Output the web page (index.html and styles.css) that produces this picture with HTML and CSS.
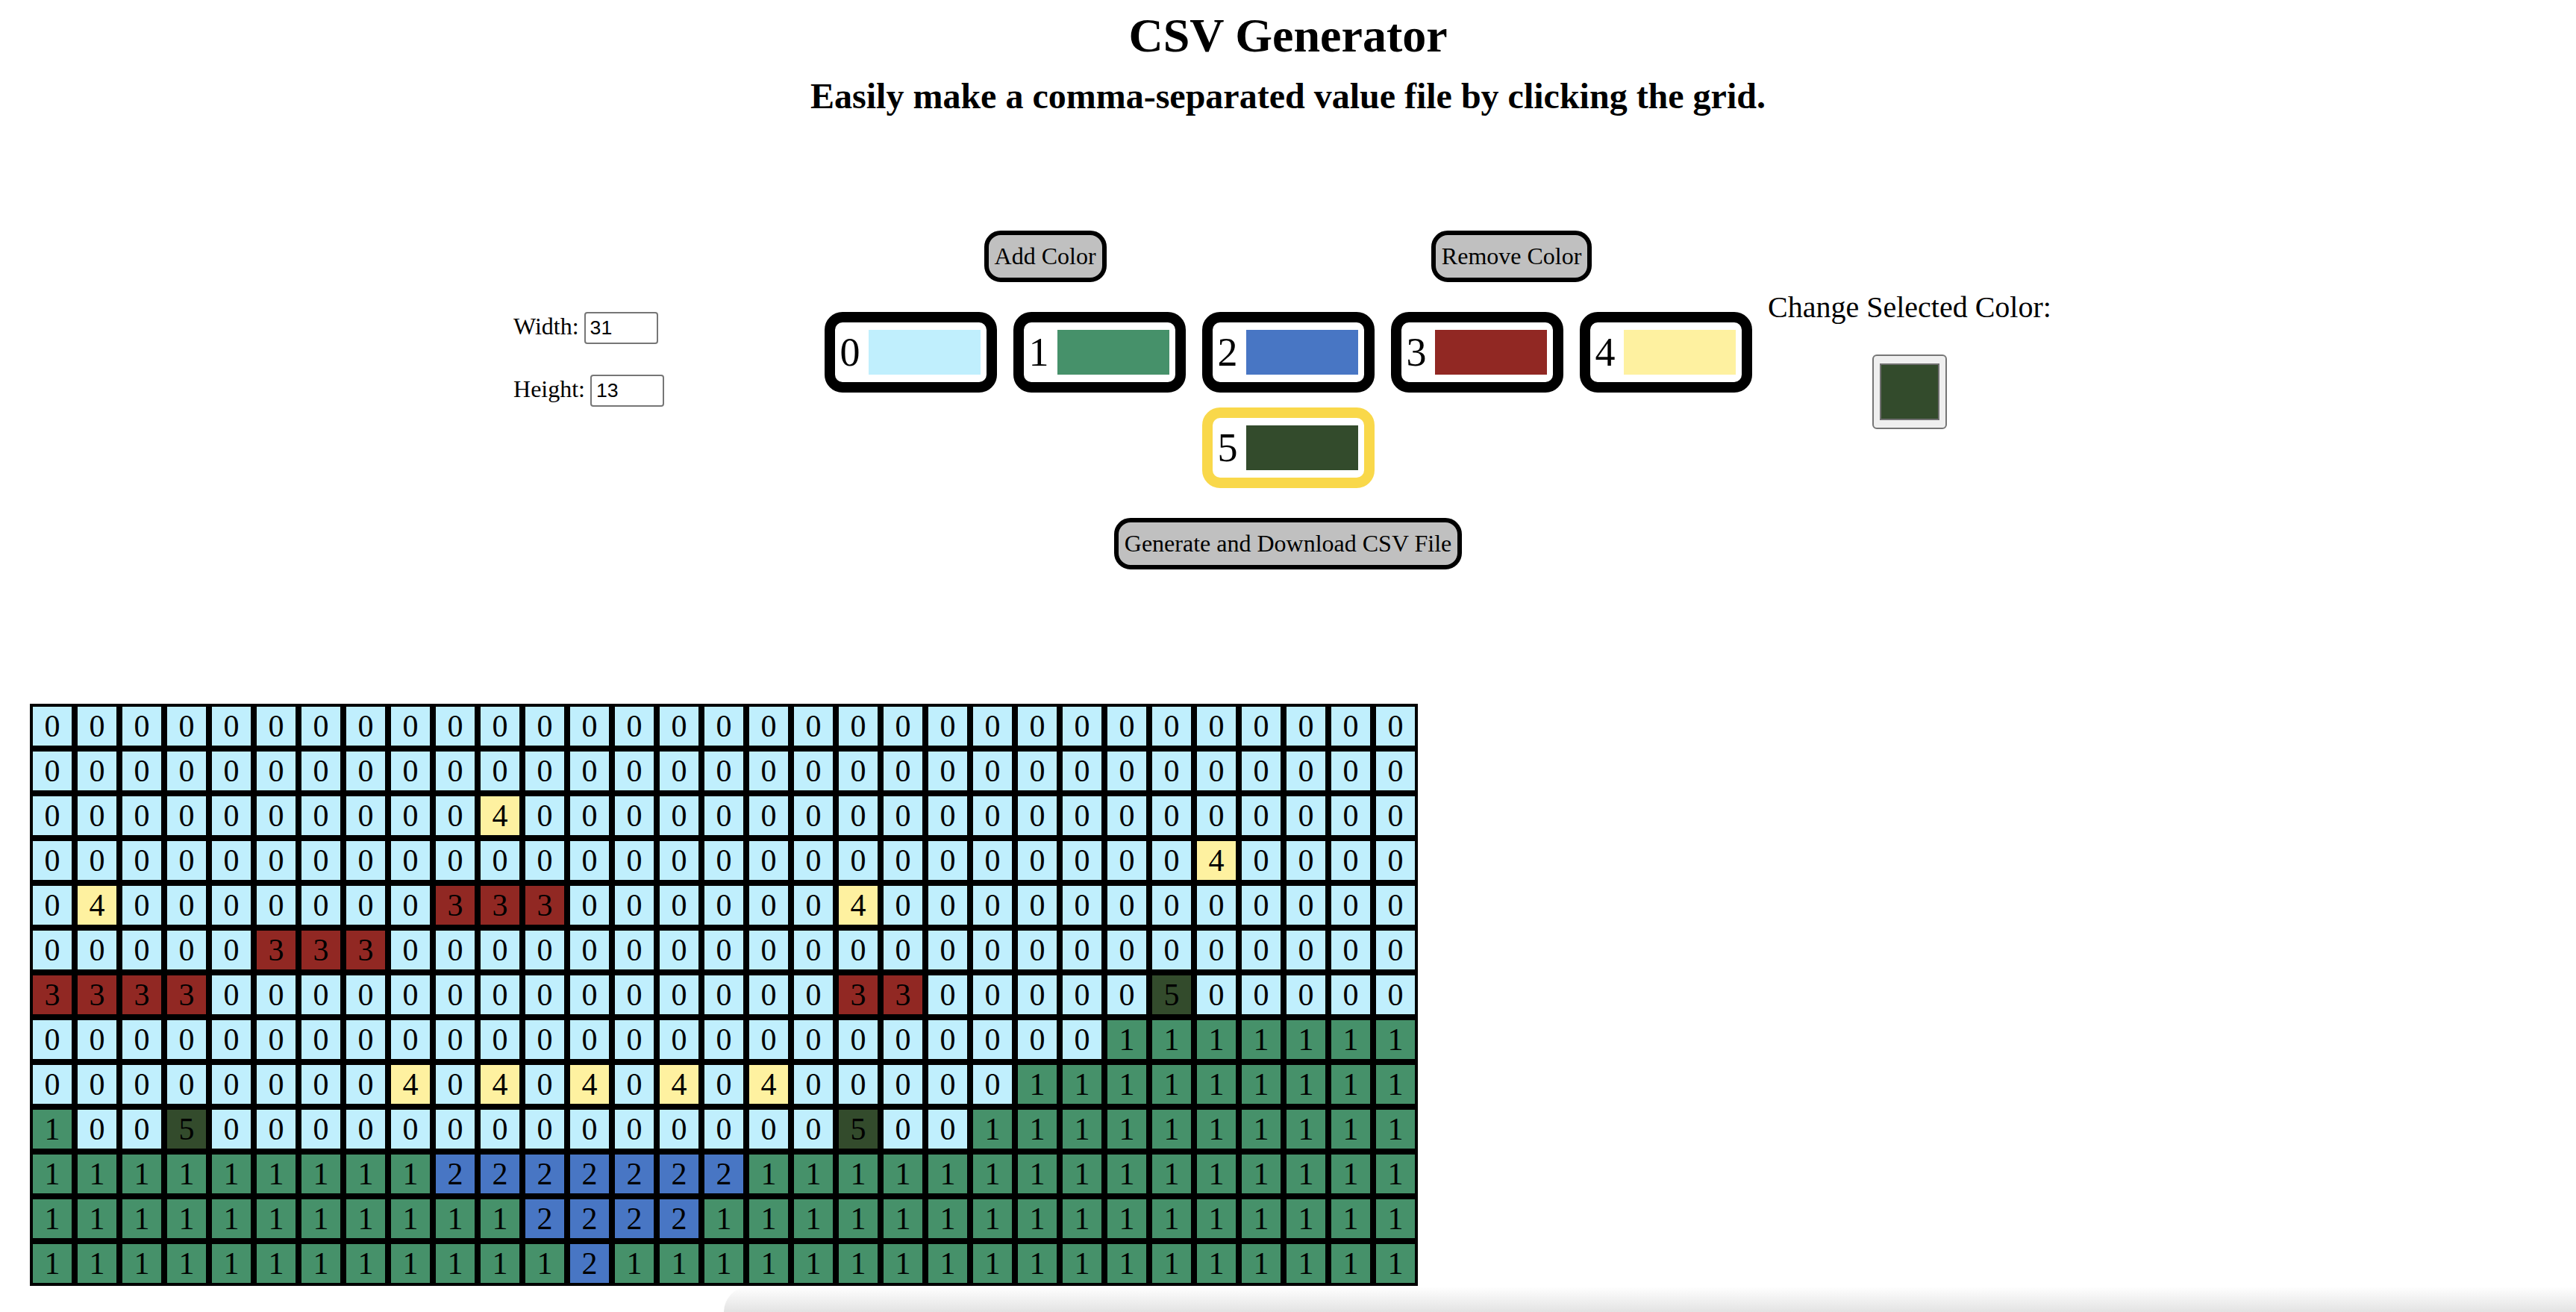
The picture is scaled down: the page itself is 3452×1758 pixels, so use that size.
FILE: index.html
```html
<!DOCTYPE html>
<html lang="en">
<head>
<meta charset="utf-8">
<title>CSV Generator</title>
<link rel="stylesheet" href="styles.css">
</head>
<body>
<h1 class="title">CSV Generator</h1>
<h2 class="subtitle">Easily make a comma-separated value file by clicking the grid.</h2>

<section class="controls">
  <div class="dims">
    <div class="dim-row"><label class="dim-label" for="w">Width:</label><input class="dim-input" id="w" type="text" value="31"></div>
    <div class="dim-row"><label class="dim-label" for="h">Height:</label><input class="dim-input" id="h" type="text" value="13"></div>
  </div>

  <div class="palette-area">
    <div class="palette-actions">
      <button class="btn">Add Color</button>
      <button class="btn">Remove Color</button>
    </div>
    <div class="swatches">
      <button class="swatch"><span class="swatch-num">0</span><span class="swatch-chip k0"></span></button>
      <button class="swatch"><span class="swatch-num">1</span><span class="swatch-chip k1"></span></button>
      <button class="swatch"><span class="swatch-num">2</span><span class="swatch-chip k2"></span></button>
      <button class="swatch"><span class="swatch-num">3</span><span class="swatch-chip k3"></span></button>
      <button class="swatch"><span class="swatch-num">4</span><span class="swatch-chip k4"></span></button>
      <button class="swatch selected"><span class="swatch-num">5</span><span class="swatch-chip k5"></span></button>
    </div>
  </div>

  <div class="picker-panel">
    <div class="picker-label">Change Selected Color:</div>
    <div class="picker"><div class="picker-chip"></div></div>
  </div>
</section>

<div class="generate-row"><button class="btn">Generate and Download CSV File</button></div>

<div class="board">
<span class="k0">0</span><span class="k0">0</span><span class="k0">0</span><span class="k0">0</span><span class="k0">0</span><span class="k0">0</span><span class="k0">0</span><span class="k0">0</span><span class="k0">0</span><span class="k0">0</span><span class="k0">0</span><span class="k0">0</span><span class="k0">0</span><span class="k0">0</span><span class="k0">0</span><span class="k0">0</span><span class="k0">0</span><span class="k0">0</span><span class="k0">0</span><span class="k0">0</span><span class="k0">0</span><span class="k0">0</span><span class="k0">0</span><span class="k0">0</span><span class="k0">0</span><span class="k0">0</span><span class="k0">0</span><span class="k0">0</span><span class="k0">0</span><span class="k0">0</span><span class="k0">0</span>
<span class="k0">0</span><span class="k0">0</span><span class="k0">0</span><span class="k0">0</span><span class="k0">0</span><span class="k0">0</span><span class="k0">0</span><span class="k0">0</span><span class="k0">0</span><span class="k0">0</span><span class="k0">0</span><span class="k0">0</span><span class="k0">0</span><span class="k0">0</span><span class="k0">0</span><span class="k0">0</span><span class="k0">0</span><span class="k0">0</span><span class="k0">0</span><span class="k0">0</span><span class="k0">0</span><span class="k0">0</span><span class="k0">0</span><span class="k0">0</span><span class="k0">0</span><span class="k0">0</span><span class="k0">0</span><span class="k0">0</span><span class="k0">0</span><span class="k0">0</span><span class="k0">0</span>
<span class="k0">0</span><span class="k0">0</span><span class="k0">0</span><span class="k0">0</span><span class="k0">0</span><span class="k0">0</span><span class="k0">0</span><span class="k0">0</span><span class="k0">0</span><span class="k0">0</span><span class="k4">4</span><span class="k0">0</span><span class="k0">0</span><span class="k0">0</span><span class="k0">0</span><span class="k0">0</span><span class="k0">0</span><span class="k0">0</span><span class="k0">0</span><span class="k0">0</span><span class="k0">0</span><span class="k0">0</span><span class="k0">0</span><span class="k0">0</span><span class="k0">0</span><span class="k0">0</span><span class="k0">0</span><span class="k0">0</span><span class="k0">0</span><span class="k0">0</span><span class="k0">0</span>
<span class="k0">0</span><span class="k0">0</span><span class="k0">0</span><span class="k0">0</span><span class="k0">0</span><span class="k0">0</span><span class="k0">0</span><span class="k0">0</span><span class="k0">0</span><span class="k0">0</span><span class="k0">0</span><span class="k0">0</span><span class="k0">0</span><span class="k0">0</span><span class="k0">0</span><span class="k0">0</span><span class="k0">0</span><span class="k0">0</span><span class="k0">0</span><span class="k0">0</span><span class="k0">0</span><span class="k0">0</span><span class="k0">0</span><span class="k0">0</span><span class="k0">0</span><span class="k0">0</span><span class="k4">4</span><span class="k0">0</span><span class="k0">0</span><span class="k0">0</span><span class="k0">0</span>
<span class="k0">0</span><span class="k4">4</span><span class="k0">0</span><span class="k0">0</span><span class="k0">0</span><span class="k0">0</span><span class="k0">0</span><span class="k0">0</span><span class="k0">0</span><span class="k3">3</span><span class="k3">3</span><span class="k3">3</span><span class="k0">0</span><span class="k0">0</span><span class="k0">0</span><span class="k0">0</span><span class="k0">0</span><span class="k0">0</span><span class="k4">4</span><span class="k0">0</span><span class="k0">0</span><span class="k0">0</span><span class="k0">0</span><span class="k0">0</span><span class="k0">0</span><span class="k0">0</span><span class="k0">0</span><span class="k0">0</span><span class="k0">0</span><span class="k0">0</span><span class="k0">0</span>
<span class="k0">0</span><span class="k0">0</span><span class="k0">0</span><span class="k0">0</span><span class="k0">0</span><span class="k3">3</span><span class="k3">3</span><span class="k3">3</span><span class="k0">0</span><span class="k0">0</span><span class="k0">0</span><span class="k0">0</span><span class="k0">0</span><span class="k0">0</span><span class="k0">0</span><span class="k0">0</span><span class="k0">0</span><span class="k0">0</span><span class="k0">0</span><span class="k0">0</span><span class="k0">0</span><span class="k0">0</span><span class="k0">0</span><span class="k0">0</span><span class="k0">0</span><span class="k0">0</span><span class="k0">0</span><span class="k0">0</span><span class="k0">0</span><span class="k0">0</span><span class="k0">0</span>
<span class="k3">3</span><span class="k3">3</span><span class="k3">3</span><span class="k3">3</span><span class="k0">0</span><span class="k0">0</span><span class="k0">0</span><span class="k0">0</span><span class="k0">0</span><span class="k0">0</span><span class="k0">0</span><span class="k0">0</span><span class="k0">0</span><span class="k0">0</span><span class="k0">0</span><span class="k0">0</span><span class="k0">0</span><span class="k0">0</span><span class="k3">3</span><span class="k3">3</span><span class="k0">0</span><span class="k0">0</span><span class="k0">0</span><span class="k0">0</span><span class="k0">0</span><span class="k5">5</span><span class="k0">0</span><span class="k0">0</span><span class="k0">0</span><span class="k0">0</span><span class="k0">0</span>
<span class="k0">0</span><span class="k0">0</span><span class="k0">0</span><span class="k0">0</span><span class="k0">0</span><span class="k0">0</span><span class="k0">0</span><span class="k0">0</span><span class="k0">0</span><span class="k0">0</span><span class="k0">0</span><span class="k0">0</span><span class="k0">0</span><span class="k0">0</span><span class="k0">0</span><span class="k0">0</span><span class="k0">0</span><span class="k0">0</span><span class="k0">0</span><span class="k0">0</span><span class="k0">0</span><span class="k0">0</span><span class="k0">0</span><span class="k0">0</span><span class="k1">1</span><span class="k1">1</span><span class="k1">1</span><span class="k1">1</span><span class="k1">1</span><span class="k1">1</span><span class="k1">1</span>
<span class="k0">0</span><span class="k0">0</span><span class="k0">0</span><span class="k0">0</span><span class="k0">0</span><span class="k0">0</span><span class="k0">0</span><span class="k0">0</span><span class="k4">4</span><span class="k0">0</span><span class="k4">4</span><span class="k0">0</span><span class="k4">4</span><span class="k0">0</span><span class="k4">4</span><span class="k0">0</span><span class="k4">4</span><span class="k0">0</span><span class="k0">0</span><span class="k0">0</span><span class="k0">0</span><span class="k0">0</span><span class="k1">1</span><span class="k1">1</span><span class="k1">1</span><span class="k1">1</span><span class="k1">1</span><span class="k1">1</span><span class="k1">1</span><span class="k1">1</span><span class="k1">1</span>
<span class="k1">1</span><span class="k0">0</span><span class="k0">0</span><span class="k5">5</span><span class="k0">0</span><span class="k0">0</span><span class="k0">0</span><span class="k0">0</span><span class="k0">0</span><span class="k0">0</span><span class="k0">0</span><span class="k0">0</span><span class="k0">0</span><span class="k0">0</span><span class="k0">0</span><span class="k0">0</span><span class="k0">0</span><span class="k0">0</span><span class="k5">5</span><span class="k0">0</span><span class="k0">0</span><span class="k1">1</span><span class="k1">1</span><span class="k1">1</span><span class="k1">1</span><span class="k1">1</span><span class="k1">1</span><span class="k1">1</span><span class="k1">1</span><span class="k1">1</span><span class="k1">1</span>
<span class="k1">1</span><span class="k1">1</span><span class="k1">1</span><span class="k1">1</span><span class="k1">1</span><span class="k1">1</span><span class="k1">1</span><span class="k1">1</span><span class="k1">1</span><span class="k2">2</span><span class="k2">2</span><span class="k2">2</span><span class="k2">2</span><span class="k2">2</span><span class="k2">2</span><span class="k2">2</span><span class="k1">1</span><span class="k1">1</span><span class="k1">1</span><span class="k1">1</span><span class="k1">1</span><span class="k1">1</span><span class="k1">1</span><span class="k1">1</span><span class="k1">1</span><span class="k1">1</span><span class="k1">1</span><span class="k1">1</span><span class="k1">1</span><span class="k1">1</span><span class="k1">1</span>
<span class="k1">1</span><span class="k1">1</span><span class="k1">1</span><span class="k1">1</span><span class="k1">1</span><span class="k1">1</span><span class="k1">1</span><span class="k1">1</span><span class="k1">1</span><span class="k1">1</span><span class="k1">1</span><span class="k2">2</span><span class="k2">2</span><span class="k2">2</span><span class="k2">2</span><span class="k1">1</span><span class="k1">1</span><span class="k1">1</span><span class="k1">1</span><span class="k1">1</span><span class="k1">1</span><span class="k1">1</span><span class="k1">1</span><span class="k1">1</span><span class="k1">1</span><span class="k1">1</span><span class="k1">1</span><span class="k1">1</span><span class="k1">1</span><span class="k1">1</span><span class="k1">1</span>
<span class="k1">1</span><span class="k1">1</span><span class="k1">1</span><span class="k1">1</span><span class="k1">1</span><span class="k1">1</span><span class="k1">1</span><span class="k1">1</span><span class="k1">1</span><span class="k1">1</span><span class="k1">1</span><span class="k1">1</span><span class="k2">2</span><span class="k1">1</span><span class="k1">1</span><span class="k1">1</span><span class="k1">1</span><span class="k1">1</span><span class="k1">1</span><span class="k1">1</span><span class="k1">1</span><span class="k1">1</span><span class="k1">1</span><span class="k1">1</span><span class="k1">1</span><span class="k1">1</span><span class="k1">1</span><span class="k1">1</span><span class="k1">1</span><span class="k1">1</span><span class="k1">1</span>
</div>

<div class="dock-shadow"></div>
</body>
</html>
```

FILE: styles.css
```css
html, body {
  margin: 0;
  background: #fff;
}

body {
  font-family: "Liberation Serif", "Times New Roman", serif;
  font-size: 32px;
  color: #000;
}

.title {
  margin: 11px 0 0;
  font-size: 64px;
  line-height: 74px;
  font-weight: 700;
  text-align: center;
}

.subtitle {
  margin: 16px 0 0;
  font-size: 48px;
  line-height: 56px;
  font-weight: 700;
  text-align: center;
}

.controls {
  display: grid;
  grid-template-columns: 1fr 1250px 1fr;
  align-items: center;
  margin-top: 152px;
}

/* left column: width / height */
.dims {
  justify-self: end;
  margin-right: 211px;
  display: flex;
  flex-direction: column;
  gap: 41px;
}

.dim-row {
  display: flex;
  align-items: baseline;
}

.dim-label {
  font-size: 32px;
  line-height: 37px;
}

.dim-input {
  width: 99px;
  height: 43px;
  box-sizing: border-box;
  margin: 0 0 0 7px;
  padding: 0 6px;
  border: 2px solid #767676;
  border-radius: 4px;
  background: #fff;
  color: #000;
  font-family: "Liberation Sans", Arial, sans-serif;
  font-size: 26.67px;
}

/* middle column: palette */
.palette-area {
  display: flex;
  flex-direction: column;
}

.palette-actions {
  display: flex;
  justify-content: space-around;
}

.btn {
  margin: 0;
  padding: 10px 8px;
  border: 6px solid #000;
  border-radius: 22px;
  background: #c0c0c0;
  color: #000;
  font-family: inherit;
  font-size: 32px;
  line-height: 37px;
}

.swatches {
  display: flex;
  flex-wrap: wrap;
  justify-content: center;
  gap: 20px 22px;
  margin-top: 40px;
}

.swatch {
  display: flex;
  align-items: center;
  box-sizing: border-box;
  height: 108px;
  margin: 0;
  padding: 0 8px 0 7px;
  border: 14px solid #000;
  border-radius: 24px;
  background: #fff;
  color: #000;
  font-family: inherit;
}

.swatch.selected {
  border-color: #f9d84a;
}

.swatch-num {
  font-size: 54px;
  line-height: 60px;
}

.swatch-chip {
  display: block;
  width: 150px;
  height: 60px;
  margin-left: 11px;
}

/* right column: colour picker */
.picker-panel {
  justify-self: start;
  margin-left: 18px;
  display: flex;
  flex-direction: column;
  align-items: center;
}

.picker-label {
  font-size: 40px;
  line-height: 46px;
}

.picker {
  margin-top: 40px;
  width: 100px;
  height: 100px;
  box-sizing: border-box;
  padding: 10px 8px;
  border: 2px solid #767676;
  border-radius: 6px;
  background: #efefef;
}

.picker-chip {
  height: 100%;
  box-sizing: border-box;
  border: 2px solid #6f6f6f;
  background: #334b2c;
}

.generate-row {
  display: flex;
  justify-content: center;
  margin-top: 40px;
}

/* grid */
.board {
  display: grid;
  grid-template-columns: repeat(31, 52px);
  grid-auto-rows: 52px;
  gap: 8px;
  padding: 4px;
  width: max-content;
  margin: 180px 0 0 40px;
  background: #000;
}

.board span {
  display: flex;
  align-items: center;
  justify-content: center;
  font-size: 42px;
  line-height: 48px;
}

.k0 { background: #c0effd; }
.k1 { background: #46916a; }
.k2 { background: #4876c4; }
.k3 { background: #912823; }
.k4 { background: #fef1a0; }
.k5 { background: #334b2c; }

.dock-shadow {
  position: fixed;
  left: 970px;
  right: 0;
  bottom: 0;
  height: 34px;
  border-top-left-radius: 34px;
  background: linear-gradient(rgba(255, 255, 255, 0), #e3e3e3);
  pointer-events: none;
}
```
